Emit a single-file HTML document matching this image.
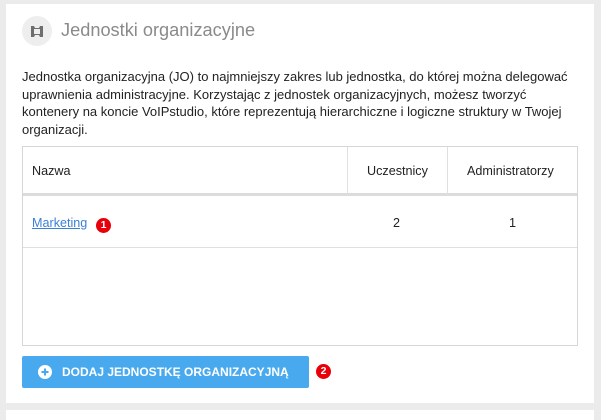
<!DOCTYPE html>
<html><head><meta charset="utf-8"><style>
*{margin:0;padding:0;box-sizing:border-box}
body{width:601px;height:412px;background:#ebebeb;font-family:"Liberation Sans",sans-serif;position:relative;overflow:hidden}
.card{position:absolute;left:6px;top:4px;width:588px;height:399px;background:#fff}
.card2{position:absolute;left:6px;top:410px;width:588px;height:10px;background:#fff}
.ic{position:absolute;left:22px;top:16px;width:30px;height:30px;border-radius:50%;background:#eeeeee}
.title{position:absolute;left:61px;top:20px;font-size:18.2px;color:#8a8a8a}
.p{position:absolute;left:22px;top:68px;width:570px;font-size:13px;line-height:17.5px;color:#222;white-space:nowrap}
.tbl{position:absolute;left:22px;top:146px;width:556px;height:200px;border:1px solid #d6d6d6}
.hd{position:absolute;left:0;top:0;width:554px;height:49px;border-bottom:3px solid #dcdcdc;font-size:12.6px;color:#222}
.v{position:absolute;top:0;height:48px;border-left:1px solid #e0e0e0}
.row{position:absolute;left:0;top:51px;width:554px;height:50px;border-bottom:1px solid #e0e0e0;font-size:12.6px;color:#222}
.badge{position:absolute;width:15px;height:15px;border-radius:50%;background:#e8000b;color:#fff;font-size:10.5px;font-weight:bold;text-align:center;line-height:15px}
.btn{position:absolute;left:22px;top:356px;width:287px;height:32px;background:#48a9ee;border-radius:2px;color:#fff;font-weight:bold;font-size:12px}
</style></head><body>
<div class="card"></div>
<div class="card2"></div>
<div class="ic"><svg width="30" height="30" viewBox="0 0 30 30"><path d="M9 10h3l1 2h4l1-2h3v11h-3l-1-2h-4l-1 2h-3z" fill="#6e6e6e"/><rect x="12" y="13" width="6" height="5" fill="#eee"/></svg></div>
<div class="title">Jednostki organizacyjne</div>
<div class="p">Jednostka organizacyjna (JO) to najmniejszy zakres lub jednostka, do której można delegować<br>uprawnienia administracyjne. Korzystając z jednostek organizacyjnych, możesz tworzyć<br>kontenery na koncie VoIPstudio, które reprezentują hierarchiczne i logiczne struktury w Twojej<br>organizacji.</div>
<div class="tbl">
 <div class="hd">
  <span style="position:absolute;left:9px;top:17px">Nazwa</span>
  <div class="v" style="left:324px"></div>
  <span style="position:absolute;left:344px;top:17px">Uczestnicy</span>
  <div class="v" style="left:424px"></div>
  <span style="position:absolute;left:444px;top:17px">Administratorzy</span>
 </div>
 <div class="row">
  <a style="position:absolute;left:9px;top:18px;color:#3b7fd9;text-decoration:underline">Marketing</a>
  <div class="badge" style="left:73px;top:20px">1</div>
  <span style="position:absolute;left:370px;top:18px">2</span>
  <span style="position:absolute;left:486px;top:18px">1</span>
 </div>
</div>
<div class="btn">
 <svg style="position:absolute;left:16px;top:9px" width="14" height="14" viewBox="0 0 14 14"><circle cx="7" cy="7" r="7" fill="#fff"/><path d="M7 3.5v7M3.5 7h7" stroke="#48a9ee" stroke-width="2"/></svg>
 <span style="position:absolute;left:40px;top:9px">DODAJ JEDNOSTKĘ ORGANIZACYJNĄ</span>
</div>
<div class="badge" style="left:316px;top:364px">2</div>
</body></html>
